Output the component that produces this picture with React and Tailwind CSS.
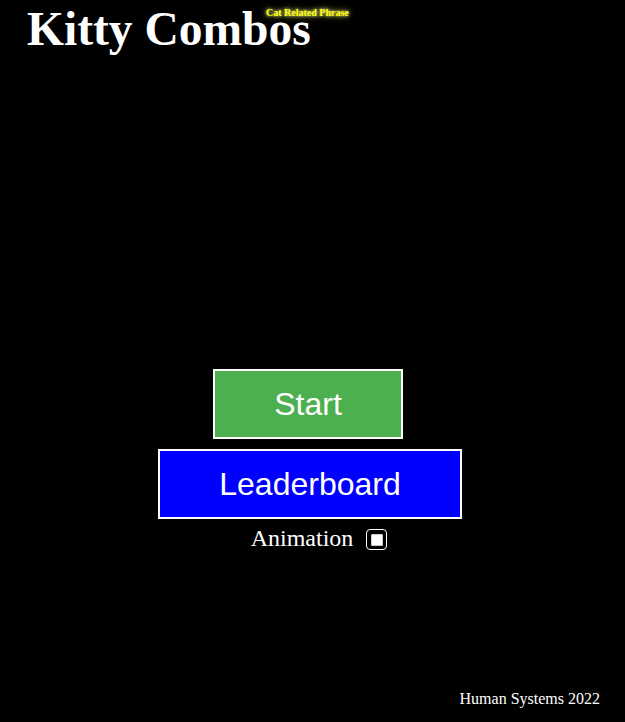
export default function App() {
  return (
    <div className="min-h-[722px] w-full bg-black text-white flex flex-col" style={{ fontFamily: '"Liberation Serif", "Times New Roman", serif' }}>
      <div className="relative h-[58px]">
        <div className="pl-[27px] text-[47.5px] leading-[58px] font-bold whitespace-nowrap">Kitty Combos</div>
        <div className="absolute left-[266px] top-[8px] text-[10px] leading-[10px] font-bold text-[#ffff00] whitespace-nowrap [text-shadow:0_0_3px_#ffffaa,0_0_6px_#ffff66]">
          Cat Related Phrase
        </div>
      </div>
      <div className="mt-[311px] w-[620px] flex flex-col items-center">
        <button className="mr-[4px] w-[190px] h-[70px] bg-[#4caf50] border-2 border-white text-white text-[32px] leading-none" style={{ fontFamily: '"Liberation Sans", Arial, sans-serif' }}>
          Start
        </button>
        <button className="mt-[10px] w-[304px] h-[70px] bg-[#0000ff] border-2 border-white text-white text-[32px] leading-none" style={{ fontFamily: '"Liberation Sans", Arial, sans-serif' }}>
          Leaderboard
        </button>
        <div className="mt-[5px] ml-[18px] flex items-start h-[28px]">
          <span className="text-[24px] leading-[28px]">Animation</span>
          <span className="ml-[13px] mt-[5px] w-[21px] h-[21px] border border-white rounded-[4px] bg-black flex items-center justify-center">
            <span className="w-[12px] h-[12px] bg-white rounded-[1px] border border-[#cccccc]"></span>
          </span>
        </div>
      </div>
      <div className="mt-auto pr-[25px] pb-[14px] text-right text-[16px] leading-[18px]">Human Systems 2022</div>
    </div>
  );
}
